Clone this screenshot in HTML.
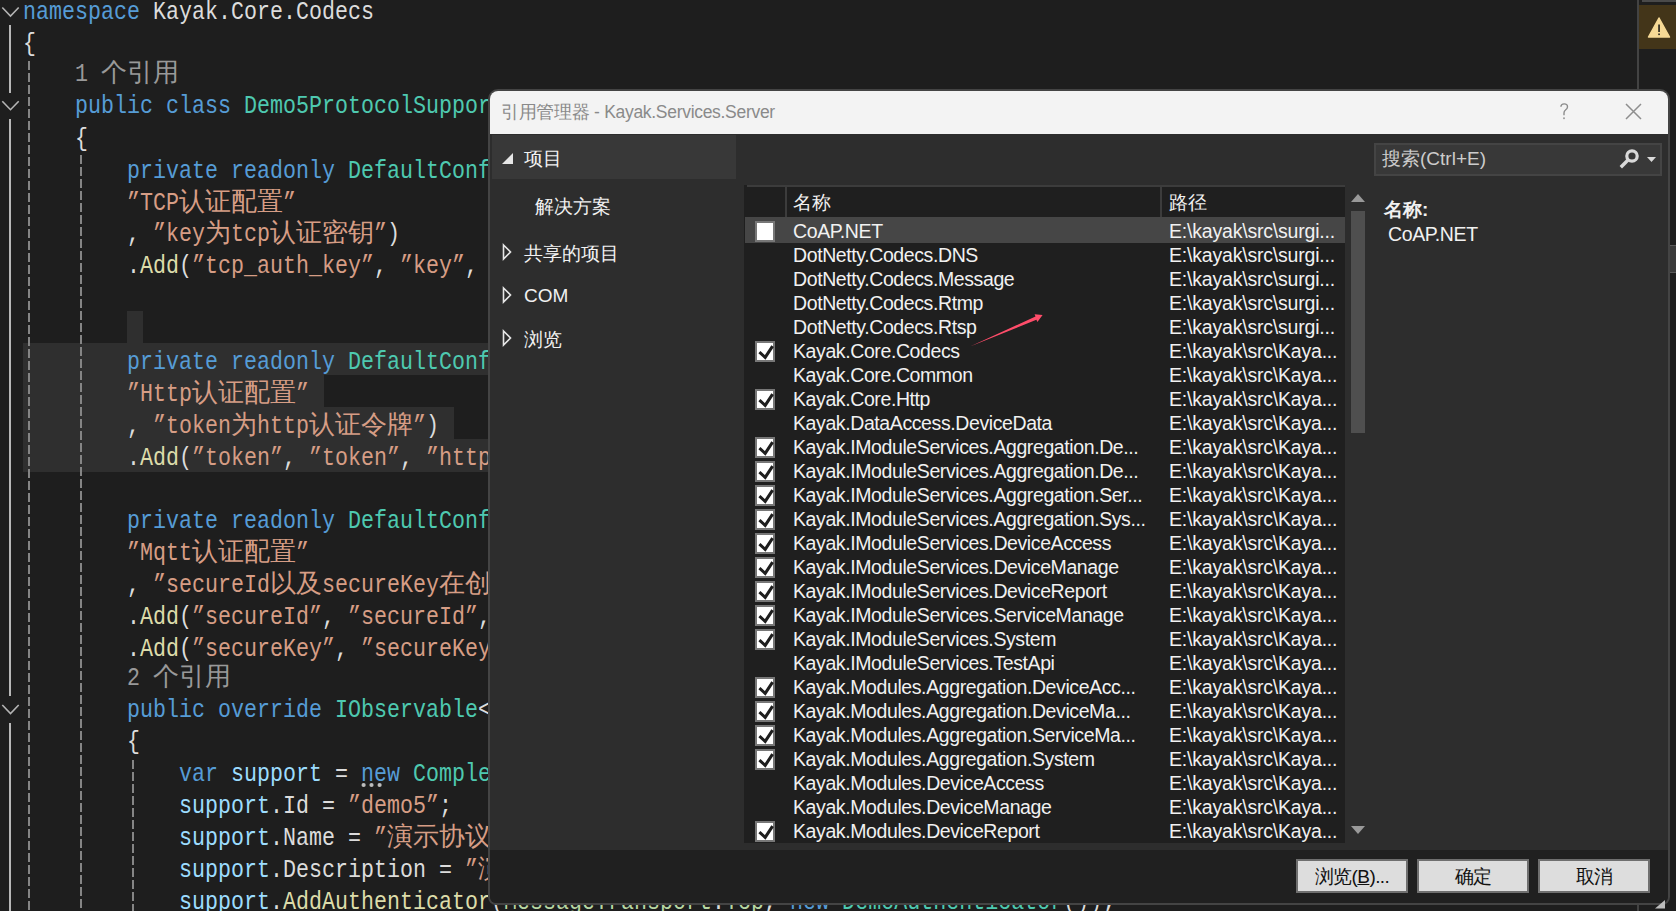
<!DOCTYPE html>
<html><head><meta charset="utf-8"><style>
*{margin:0;padding:0;box-sizing:border-box}
html,body{width:1676px;height:911px;overflow:hidden;background:#1e1e1e;position:relative}
.abs{position:absolute}
.ln{position:absolute;white-space:pre;font-family:"Liberation Mono",monospace;font-size:26px;line-height:32px;height:32px;transform-origin:0 0;transform:scaleX(0.8333)}
.ln .c{display:inline-block;white-space:nowrap;transform:scaleX(1.2);transform-origin:0 0}
.hl{position:absolute;background:#2f2f2f}
.vg{position:absolute;width:2px;background:#bdbdbd}
.dg{position:absolute;width:2px;background:repeating-linear-gradient(to bottom,#858585 0 9px,transparent 9px 12px)}
.chev{position:absolute;width:18px;height:10px}
#dlg{position:absolute;left:488px;top:89px;width:1182px;height:816px;border:2px solid #444;border-radius:10px 10px 8px 8px;background:#2d2d2d;overflow:hidden;font-family:"Liberation Sans",sans-serif}
.ui{font-family:"Liberation Sans",sans-serif;font-size:19px;color:#f1f1f1;white-space:pre;position:absolute;line-height:24px}
.sel{position:absolute;left:745px;width:600px;height:26px;background:#464646}
.cb{position:absolute;left:755px;width:20px;height:21px;background:#fff;border:2px solid #777}
.rt{position:absolute;font-family:"Liberation Sans",sans-serif;font-size:19.5px;letter-spacing:-0.4px;color:#f1f1f1;white-space:pre;line-height:26px;height:26px;margin-top:1.2px}
.btn{position:absolute;top:859px;width:112px;height:34px;background:#dddddd;border:2px solid #6f6f6f;font-family:"Liberation Sans",sans-serif;font-size:19px;letter-spacing:-0.6px;color:#111;text-align:center;line-height:31px}
.tri{position:absolute}
</style></head><body>
<!-- editor -->
<div class="hl" style="left:127px;top:311px;width:16px;height:32px"></div>
<div class="hl" style="left:23px;top:343px;width:470px;height:32px"></div>
<div class="hl" style="left:23px;top:375px;width:301px;height:32px"></div>
<div class="hl" style="left:23px;top:407px;width:431px;height:32px"></div>
<div class="hl" style="left:23px;top:439px;width:470px;height:33px"></div>
<svg class="abs" style="left:0;top:0" width="24" height="911">
<path d="M2.3 7.5 L10.5 16 L18.7 7.5" stroke="#b4b4b4" stroke-width="1.6" fill="none"/>
<path d="M2.3 101.2 L10.5 109.7 L18.7 101.2" stroke="#b4b4b4" stroke-width="1.6" fill="none"/>
<path d="M2.3 705 L10.5 713.5 L18.7 705" stroke="#b4b4b4" stroke-width="1.6" fill="none"/>
<rect x="9" y="25" width="2" height="68" fill="#b8b8b8"/>
<rect x="9" y="119" width="2" height="577" fill="#b8b8b8"/>
<rect x="9" y="723" width="2" height="188" fill="#b8b8b8"/>
</svg>
<div class="dg" style="left:28px;top:61px;height:850px"></div>
<div class="dg" style="left:80px;top:155px;height:756px"></div>
<div class="dg" style="left:132px;top:760px;height:151px"></div>
<div class="ln " style="top:-4.0px;left:23.0px"><span style="color:#569cd6">namespace</span><span style="color:#dcdcdc"> Kayak.Core.Codecs</span></div>
<div class="ln " style="top:27.9px;left:23.0px"><span style="color:#dcdcdc">{</span></div>
<div class="ln lens" style="top:57.6px;left:75.0px"><span style="color:#999999">1 <span class="c" style="width:78px;margin-right:15.6px">个引用</span></span></div>
<div class="ln " style="top:90.4px;left:75.0px"><span style="color:#569cd6">public</span><span style="color:#dcdcdc"> </span><span style="color:#569cd6">class</span><span style="color:#dcdcdc"> </span><span style="color:#4ec9b0">Demo5ProtocolSupportProvider</span><span style="color:#dcdcdc"> : </span><span style="color:#4ec9b0">IProtocolSupportProvider</span></div>
<div class="ln " style="top:122.5px;left:75.0px"><span style="color:#dcdcdc">{</span></div>
<div class="ln " style="top:154.7px;left:127.0px"><span style="color:#569cd6">private</span><span style="color:#dcdcdc"> </span><span style="color:#569cd6">readonly</span><span style="color:#dcdcdc"> </span><span style="color:#4ec9b0">DefaultConfigMetadata</span><span style="color:#dcdcdc"> _tcpConfig = </span><span style="color:#569cd6">new</span><span style="color:#dcdcdc"> </span><span style="color:#4ec9b0">DefaultConfigMetadata</span><span style="color:#dcdcdc">(</span></div>
<div class="ln " style="top:186.6px;left:127.0px"><span style="color:#d69d85">”TCP<span class="c" style="width:104px;margin-right:20.8px">认证配置</span>”</span></div>
<div class="ln " style="top:218.4px;left:127.0px"><span style="color:#dcdcdc">, </span><span style="color:#d69d85">”key<span class="c" style="width:26px;margin-right:5.2px">为</span>tcp<span class="c" style="width:104px;margin-right:20.8px">认证密钥</span>”</span><span style="color:#dcdcdc">)</span></div>
<div class="ln " style="top:250.3px;left:127.0px"><span style="color:#dcdcdc">.</span><span style="color:#dcdcaa">Add</span><span style="color:#dcdcdc">(</span><span style="color:#d69d85">”tcp_auth_key”</span><span style="color:#dcdcdc">, </span><span style="color:#d69d85">”key”</span><span style="color:#dcdcdc">, </span><span style="color:#d69d85">”TCP<span class="c" style="width:52px;margin-right:10.4px">认证</span>KEY”</span><span style="color:#dcdcdc">, </span><span style="color:#4ec9b0">StringType</span><span style="color:#dcdcdc">.Instance);</span></div>
<div class="ln " style="top:345.9px;left:127.0px"><span style="color:#569cd6">private</span><span style="color:#dcdcdc"> </span><span style="color:#569cd6">readonly</span><span style="color:#dcdcdc"> </span><span style="color:#4ec9b0">DefaultConfigMetadata</span><span style="color:#dcdcdc"> _httpConfig = </span><span style="color:#569cd6">new</span><span style="color:#dcdcdc"> </span><span style="color:#4ec9b0">DefaultConfigMetadata</span><span style="color:#dcdcdc">(</span></div>
<div class="ln " style="top:377.8px;left:127.0px"><span style="color:#d69d85">”Http<span class="c" style="width:104px;margin-right:20.8px">认证配置</span>”</span></div>
<div class="ln " style="top:409.7px;left:127.0px"><span style="color:#dcdcdc">, </span><span style="color:#d69d85">”token<span class="c" style="width:26px;margin-right:5.2px">为</span>http<span class="c" style="width:104px;margin-right:20.8px">认证令牌</span>”</span><span style="color:#dcdcdc">)</span></div>
<div class="ln " style="top:441.5px;left:127.0px"><span style="color:#dcdcdc">.</span><span style="color:#dcdcaa">Add</span><span style="color:#dcdcdc">(</span><span style="color:#d69d85">”token”</span><span style="color:#dcdcdc">, </span><span style="color:#d69d85">”token”</span><span style="color:#dcdcdc">, </span><span style="color:#d69d85">”http<span class="c" style="width:52px;margin-right:10.4px">令牌</span>”</span><span style="color:#dcdcdc">, </span><span style="color:#4ec9b0">StringType</span><span style="color:#dcdcdc">.Instance);</span></div>
<div class="ln " style="top:505.3px;left:127.0px"><span style="color:#569cd6">private</span><span style="color:#dcdcdc"> </span><span style="color:#569cd6">readonly</span><span style="color:#dcdcdc"> </span><span style="color:#4ec9b0">DefaultConfigMetadata</span><span style="color:#dcdcdc"> _mqttConfig = </span><span style="color:#569cd6">new</span><span style="color:#dcdcdc"> </span><span style="color:#4ec9b0">DefaultConfigMetadata</span><span style="color:#dcdcdc">(</span></div>
<div class="ln " style="top:537.1px;left:127.0px"><span style="color:#d69d85">”Mqtt<span class="c" style="width:104px;margin-right:20.8px">认证配置</span>”</span></div>
<div class="ln " style="top:569.0px;left:127.0px"><span style="color:#dcdcdc">, </span><span style="color:#d69d85">”secureId<span class="c" style="width:52px;margin-right:10.4px">以及</span>secureKey<span class="c" style="width:442px;margin-right:88.4px">在创建设备产品或设备实例时进行配置</span>.”</span><span style="color:#dcdcdc">)</span></div>
<div class="ln " style="top:600.9px;left:127.0px"><span style="color:#dcdcdc">.</span><span style="color:#dcdcaa">Add</span><span style="color:#dcdcdc">(</span><span style="color:#d69d85">”secureId”</span><span style="color:#dcdcdc">, </span><span style="color:#d69d85">”secureId”</span><span style="color:#dcdcdc">, </span><span style="color:#d69d85">”<span class="c" style="width:52px;margin-right:10.4px">密钥</span>ID”</span><span style="color:#dcdcdc">, </span><span style="color:#4ec9b0">StringType</span><span style="color:#dcdcdc">.Instance)</span></div>
<div class="ln " style="top:632.8px;left:127.0px"><span style="color:#dcdcdc">.</span><span style="color:#dcdcaa">Add</span><span style="color:#dcdcdc">(</span><span style="color:#d69d85">”secureKey”</span><span style="color:#dcdcdc">, </span><span style="color:#d69d85">”secureKey”</span><span style="color:#dcdcdc">, </span><span style="color:#d69d85">”<span class="c" style="width:52px;margin-right:10.4px">密钥</span>”</span><span style="color:#dcdcdc">, </span><span style="color:#4ec9b0">StringType</span><span style="color:#dcdcdc">.Instance);</span></div>
<div class="ln lens" style="top:661.5px;left:127.0px"><span style="color:#999999">2 <span class="c" style="width:78px;margin-right:15.6px">个引用</span></span></div>
<div class="ln " style="top:694.4px;left:127.0px"><span style="color:#569cd6">public</span><span style="color:#dcdcdc"> </span><span style="color:#569cd6">override</span><span style="color:#dcdcdc"> </span><span style="color:#4ec9b0">IObservable</span><span style="color:#dcdcdc">&lt;</span><span style="color:#4ec9b0">ProtocolSupport</span><span style="color:#dcdcdc">&gt; Create(</span></div>
<div class="ln " style="top:726.3px;left:127.0px"><span style="color:#dcdcdc">{</span></div>
<div class="ln " style="top:758.2px;left:179.0px"><span style="color:#569cd6">var</span><span style="color:#dcdcdc"> </span><span style="color:#9cdcfe">support</span><span style="color:#dcdcdc"> = </span><span style="color:#569cd6">new</span><span style="color:#dcdcdc"> </span><span style="color:#4ec9b0">ComplexProtocolSupport</span><span style="color:#dcdcdc">();</span></div>
<div class="ln " style="top:790.0px;left:179.0px"><span style="color:#9cdcfe">support</span><span style="color:#dcdcdc">.Id = </span><span style="color:#d69d85">”demo5”</span><span style="color:#dcdcdc">;</span></div>
<div class="ln " style="top:821.9px;left:179.0px"><span style="color:#9cdcfe">support</span><span style="color:#dcdcdc">.Name = </span><span style="color:#d69d85">”<span class="c" style="width:104px;margin-right:20.8px">演示协议</span>5”</span><span style="color:#dcdcdc">;</span></div>
<div class="ln " style="top:853.8px;left:179.0px"><span style="color:#9cdcfe">support</span><span style="color:#dcdcdc">.Description = </span><span style="color:#d69d85">”<span class="c" style="width:104px;margin-right:20.8px">演示协议</span>5”</span><span style="color:#dcdcdc">;</span></div>
<div class="ln " style="top:885.6px;left:179.0px"><span style="color:#9cdcfe">support</span><span style="color:#dcdcdc">.</span><span style="color:#dcdcaa">AddAuthenticator</span><span style="color:#dcdcdc">(</span><span style="color:#b8d7a3">MessageTransport</span><span style="color:#dcdcdc">.</span><span style="color:#b8d7a3">Tcp</span><span style="color:#dcdcdc">, </span><span style="color:#569cd6">new</span><span style="color:#dcdcdc"> </span><span style="color:#4ec9b0">DemoAuthenticator</span><span style="color:#dcdcdc">());</span></div>

<svg class="abs" style="left:358px;top:780px" width="28" height="10"><circle cx="5.6" cy="5" r="2.1" fill="#bdbdbd"/><circle cx="13.5" cy="5" r="2.1" fill="#bdbdbd"/><circle cx="21.6" cy="5" r="2.1" fill="#bdbdbd"/></svg>
<!-- right strip -->
<div class="abs" style="left:1637px;top:0;width:2px;height:911px;background:#434343"></div>
<div class="abs" style="left:1642px;top:0;width:34px;height:2px;background:#4a4a4a"></div>
<div class="abs" style="left:1639px;top:5px;width:37px;height:44px;background:#433519"></div>
<svg class="abs" style="left:1646px;top:15px" width="26" height="26" viewBox="0 0 26 26"><path d="M13 3 L23.5 22 L2.5 22 Z" fill="#f6d995" stroke="#f6d995" stroke-width="1.5" stroke-linejoin="round"/><rect x="12.3" y="9.5" width="1.5" height="7.5" fill="#111"/><rect x="12.3" y="18.5" width="1.5" height="1.6" fill="#111"/></svg>
<div class="abs" style="left:1668px;top:245px;width:8px;height:28px;background:#3a3a3a;border:1px solid #5a5a5a;border-right:none"></div>

<!-- dialog -->
<div id="dlg">
 <div class="abs" style="left:0;top:0;width:1178px;height:43px;background:#f3f3f3"></div>
 <div class="abs" style="left:0;top:759px;width:1178px;height:60px;background:#202020"></div>
</div>
<div class="ui" style="left:501px;top:100px;font-size:17.5px;letter-spacing:-0.3px;color:#8a8a8a"><span style="display:inline-block;width:88.5px">引用管理器</span> - Kayak.Services.Server</div>
<svg class="abs" style="left:1556px;top:100px" width="16" height="24"><path d="M4.9 6.8 C5 4.7 6.4 3.9 8.2 3.9 C10.2 3.9 11.5 5.1 11.5 6.9 C11.5 8.6 10.3 9.4 9.2 10.3 C8.3 11 8 11.7 8 13 L8 15.3" stroke="#8c8c8c" stroke-width="1.4" fill="none"/><rect x="7.25" y="17.4" width="1.5" height="1.7" fill="#8c8c8c"/></svg>
<svg class="abs" style="left:1624px;top:102px" width="19" height="19"><path d="M2 2 L17 17 M17 2 L2 17" stroke="#8e8e8e" stroke-width="1.5"/></svg>

<div class="abs" style="left:492px;top:135px;width:244px;height:44px;background:#383838"></div>
<svg class="abs" style="left:500px;top:150px" width="16" height="16"><path d="M13 3 L13 14 L2 14 Z" fill="#e6e6e6"/></svg>
<div class="ui" style="left:524px;top:147px">项目</div>
<div class="ui" style="left:535px;top:194.5px">解决方案</div>
<svg class="abs" style="left:500px;top:243px" width="14" height="18"><path d="M3.5 2 L10.5 9 L3.5 16 Z" fill="none" stroke="#e6e6e6" stroke-width="1.6"/></svg>
<div class="ui" style="left:524px;top:241.5px">共享的项目</div>
<svg class="abs" style="left:500px;top:286px" width="14" height="18"><path d="M3.5 2 L10.5 9 L3.5 16 Z" fill="none" stroke="#e6e6e6" stroke-width="1.6"/></svg>
<div class="ui" style="left:524px;top:284px">COM</div>
<svg class="abs" style="left:500px;top:329px" width="14" height="18"><path d="M3.5 2 L10.5 9 L3.5 16 Z" fill="none" stroke="#e6e6e6" stroke-width="1.6"/></svg>
<div class="ui" style="left:524px;top:328px">浏览</div>

<!-- list -->
<div class="abs" style="left:744px;top:185px;width:601px;height:658px;background:#1f1f1f"></div>
<div class="abs" style="left:747px;top:185px;width:598px;height:2px;background:#3c3c3c"></div>
<div class="abs" style="left:785px;top:187px;width:2px;height:30px;background:#3c3c3c"></div>
<div class="abs" style="left:1160px;top:187px;width:2px;height:30px;background:#3c3c3c"></div>
<div class="ui" style="left:793px;top:191px">名称</div>
<div class="ui" style="left:1169px;top:191px">路径</div>
<div class="sel" style="top:217px"></div><div class="cb" style="top:221px"></div><div class="rt" style="top:217px;left:793px">CoAP.NET</div><div class="rt" style="top:217px;left:1169px;letter-spacing:-0.2px">E:\kayak\src\surgi...</div><div class="rt" style="top:241px;left:793px">DotNetty.Codecs.DNS</div><div class="rt" style="top:241px;left:1169px;letter-spacing:-0.2px">E:\kayak\src\surgi...</div><div class="rt" style="top:265px;left:793px">DotNetty.Codecs.Message</div><div class="rt" style="top:265px;left:1169px;letter-spacing:-0.2px">E:\kayak\src\surgi...</div><div class="rt" style="top:289px;left:793px">DotNetty.Codecs.Rtmp</div><div class="rt" style="top:289px;left:1169px;letter-spacing:-0.2px">E:\kayak\src\surgi...</div><div class="rt" style="top:313px;left:793px">DotNetty.Codecs.Rtsp</div><div class="rt" style="top:313px;left:1169px;letter-spacing:-0.2px">E:\kayak\src\surgi...</div><div class="cb" style="top:341px"><svg width="17" height="17" viewBox="0 0 17 17" style="position:absolute;left:0;top:0"><path d="M2.4 9.2 L8.2 14.4 L15.6 3.2" stroke="#1e1e1e" stroke-width="3" fill="none"/></svg></div><div class="rt" style="top:337px;left:793px">Kayak.Core.Codecs</div><div class="rt" style="top:337px;left:1169px;letter-spacing:-0.2px">E:\kayak\src\Kaya...</div><div class="rt" style="top:361px;left:793px">Kayak.Core.Common</div><div class="rt" style="top:361px;left:1169px;letter-spacing:-0.2px">E:\kayak\src\Kaya...</div><div class="cb" style="top:389px"><svg width="17" height="17" viewBox="0 0 17 17" style="position:absolute;left:0;top:0"><path d="M2.4 9.2 L8.2 14.4 L15.6 3.2" stroke="#1e1e1e" stroke-width="3" fill="none"/></svg></div><div class="rt" style="top:385px;left:793px">Kayak.Core.Http</div><div class="rt" style="top:385px;left:1169px;letter-spacing:-0.2px">E:\kayak\src\Kaya...</div><div class="rt" style="top:409px;left:793px">Kayak.DataAccess.DeviceData</div><div class="rt" style="top:409px;left:1169px;letter-spacing:-0.2px">E:\kayak\src\Kaya...</div><div class="cb" style="top:437px"><svg width="17" height="17" viewBox="0 0 17 17" style="position:absolute;left:0;top:0"><path d="M2.4 9.2 L8.2 14.4 L15.6 3.2" stroke="#1e1e1e" stroke-width="3" fill="none"/></svg></div><div class="rt" style="top:433px;left:793px">Kayak.IModuleServices.Aggregation.De...</div><div class="rt" style="top:433px;left:1169px;letter-spacing:-0.2px">E:\kayak\src\Kaya...</div><div class="cb" style="top:461px"><svg width="17" height="17" viewBox="0 0 17 17" style="position:absolute;left:0;top:0"><path d="M2.4 9.2 L8.2 14.4 L15.6 3.2" stroke="#1e1e1e" stroke-width="3" fill="none"/></svg></div><div class="rt" style="top:457px;left:793px">Kayak.IModuleServices.Aggregation.De...</div><div class="rt" style="top:457px;left:1169px;letter-spacing:-0.2px">E:\kayak\src\Kaya...</div><div class="cb" style="top:485px"><svg width="17" height="17" viewBox="0 0 17 17" style="position:absolute;left:0;top:0"><path d="M2.4 9.2 L8.2 14.4 L15.6 3.2" stroke="#1e1e1e" stroke-width="3" fill="none"/></svg></div><div class="rt" style="top:481px;left:793px">Kayak.IModuleServices.Aggregation.Ser...</div><div class="rt" style="top:481px;left:1169px;letter-spacing:-0.2px">E:\kayak\src\Kaya...</div><div class="cb" style="top:509px"><svg width="17" height="17" viewBox="0 0 17 17" style="position:absolute;left:0;top:0"><path d="M2.4 9.2 L8.2 14.4 L15.6 3.2" stroke="#1e1e1e" stroke-width="3" fill="none"/></svg></div><div class="rt" style="top:505px;left:793px">Kayak.IModuleServices.Aggregation.Sys...</div><div class="rt" style="top:505px;left:1169px;letter-spacing:-0.2px">E:\kayak\src\Kaya...</div><div class="cb" style="top:533px"><svg width="17" height="17" viewBox="0 0 17 17" style="position:absolute;left:0;top:0"><path d="M2.4 9.2 L8.2 14.4 L15.6 3.2" stroke="#1e1e1e" stroke-width="3" fill="none"/></svg></div><div class="rt" style="top:529px;left:793px">Kayak.IModuleServices.DeviceAccess</div><div class="rt" style="top:529px;left:1169px;letter-spacing:-0.2px">E:\kayak\src\Kaya...</div><div class="cb" style="top:557px"><svg width="17" height="17" viewBox="0 0 17 17" style="position:absolute;left:0;top:0"><path d="M2.4 9.2 L8.2 14.4 L15.6 3.2" stroke="#1e1e1e" stroke-width="3" fill="none"/></svg></div><div class="rt" style="top:553px;left:793px">Kayak.IModuleServices.DeviceManage</div><div class="rt" style="top:553px;left:1169px;letter-spacing:-0.2px">E:\kayak\src\Kaya...</div><div class="cb" style="top:581px"><svg width="17" height="17" viewBox="0 0 17 17" style="position:absolute;left:0;top:0"><path d="M2.4 9.2 L8.2 14.4 L15.6 3.2" stroke="#1e1e1e" stroke-width="3" fill="none"/></svg></div><div class="rt" style="top:577px;left:793px">Kayak.IModuleServices.DeviceReport</div><div class="rt" style="top:577px;left:1169px;letter-spacing:-0.2px">E:\kayak\src\Kaya...</div><div class="cb" style="top:605px"><svg width="17" height="17" viewBox="0 0 17 17" style="position:absolute;left:0;top:0"><path d="M2.4 9.2 L8.2 14.4 L15.6 3.2" stroke="#1e1e1e" stroke-width="3" fill="none"/></svg></div><div class="rt" style="top:601px;left:793px">Kayak.IModuleServices.ServiceManage</div><div class="rt" style="top:601px;left:1169px;letter-spacing:-0.2px">E:\kayak\src\Kaya...</div><div class="cb" style="top:629px"><svg width="17" height="17" viewBox="0 0 17 17" style="position:absolute;left:0;top:0"><path d="M2.4 9.2 L8.2 14.4 L15.6 3.2" stroke="#1e1e1e" stroke-width="3" fill="none"/></svg></div><div class="rt" style="top:625px;left:793px">Kayak.IModuleServices.System</div><div class="rt" style="top:625px;left:1169px;letter-spacing:-0.2px">E:\kayak\src\Kaya...</div><div class="rt" style="top:649px;left:793px">Kayak.IModuleServices.TestApi</div><div class="rt" style="top:649px;left:1169px;letter-spacing:-0.2px">E:\kayak\src\Kaya...</div><div class="cb" style="top:677px"><svg width="17" height="17" viewBox="0 0 17 17" style="position:absolute;left:0;top:0"><path d="M2.4 9.2 L8.2 14.4 L15.6 3.2" stroke="#1e1e1e" stroke-width="3" fill="none"/></svg></div><div class="rt" style="top:673px;left:793px">Kayak.Modules.Aggregation.DeviceAcc...</div><div class="rt" style="top:673px;left:1169px;letter-spacing:-0.2px">E:\kayak\src\Kaya...</div><div class="cb" style="top:701px"><svg width="17" height="17" viewBox="0 0 17 17" style="position:absolute;left:0;top:0"><path d="M2.4 9.2 L8.2 14.4 L15.6 3.2" stroke="#1e1e1e" stroke-width="3" fill="none"/></svg></div><div class="rt" style="top:697px;left:793px">Kayak.Modules.Aggregation.DeviceMa...</div><div class="rt" style="top:697px;left:1169px;letter-spacing:-0.2px">E:\kayak\src\Kaya...</div><div class="cb" style="top:725px"><svg width="17" height="17" viewBox="0 0 17 17" style="position:absolute;left:0;top:0"><path d="M2.4 9.2 L8.2 14.4 L15.6 3.2" stroke="#1e1e1e" stroke-width="3" fill="none"/></svg></div><div class="rt" style="top:721px;left:793px">Kayak.Modules.Aggregation.ServiceMa...</div><div class="rt" style="top:721px;left:1169px;letter-spacing:-0.2px">E:\kayak\src\Kaya...</div><div class="cb" style="top:749px"><svg width="17" height="17" viewBox="0 0 17 17" style="position:absolute;left:0;top:0"><path d="M2.4 9.2 L8.2 14.4 L15.6 3.2" stroke="#1e1e1e" stroke-width="3" fill="none"/></svg></div><div class="rt" style="top:745px;left:793px">Kayak.Modules.Aggregation.System</div><div class="rt" style="top:745px;left:1169px;letter-spacing:-0.2px">E:\kayak\src\Kaya...</div><div class="rt" style="top:769px;left:793px">Kayak.Modules.DeviceAccess</div><div class="rt" style="top:769px;left:1169px;letter-spacing:-0.2px">E:\kayak\src\Kaya...</div><div class="rt" style="top:793px;left:793px">Kayak.Modules.DeviceManage</div><div class="rt" style="top:793px;left:1169px;letter-spacing:-0.2px">E:\kayak\src\Kaya...</div><div class="cb" style="top:821px"><svg width="17" height="17" viewBox="0 0 17 17" style="position:absolute;left:0;top:0"><path d="M2.4 9.2 L8.2 14.4 L15.6 3.2" stroke="#1e1e1e" stroke-width="3" fill="none"/></svg></div><div class="rt" style="top:817px;left:793px">Kayak.Modules.DeviceReport</div><div class="rt" style="top:817px;left:1169px;letter-spacing:-0.2px">E:\kayak\src\Kaya...</div>
<!-- arrow -->
<svg class="abs" style="left:960px;top:305px" width="90" height="50"><path d="M10 41.5 L75.5 11.6 L74.6 9.2 L82.6 10 L77.4 17 L76.4 14.8 Z" fill="#ff4d6a"/></svg>
<!-- scrollbar -->
<svg class="abs" style="left:1350px;top:192px" width="16" height="12"><path d="M1 10 L8 2 L15 10 Z" fill="#999"/></svg>
<div class="abs" style="left:1351px;top:211px;width:14px;height:222px;background:#4f4f4f"></div>
<svg class="abs" style="left:1350px;top:824px" width="16" height="12"><path d="M1 2 L8 10 L15 2 Z" fill="#999"/></svg>

<!-- search -->
<div class="abs" style="left:1374px;top:143px;width:288px;height:33px;background:#383838;border:2px solid #444"></div>
<div class="ui" style="left:1382px;top:147px;color:#cccccc"><span style="display:inline-block;width:38px">搜索</span>(Ctrl+E)</div>
<svg class="abs" style="left:1616px;top:145px" width="24" height="26"><circle cx="16" cy="11" r="5.2" stroke="#d9d9d9" stroke-width="3.2" fill="none"/><path d="M12.5 14.5 L4.8 22.2" stroke="#d9d9d9" stroke-width="3.4"/></svg>
<svg class="abs" style="left:1646px;top:156px" width="12" height="8"><path d="M1 1 L10 1 L5.5 6 Z" fill="#d9d9d9"/></svg>
<div class="ui" style="left:1384px;top:198px;font-weight:bold">名称:</div>
<div class="ui" style="left:1388px;top:222px;font-size:19.5px;letter-spacing:-0.4px">CoAP.NET</div>

<!-- footer -->

<svg class="abs" style="left:1650px;top:895px" width="20" height="16"><path d="M5 13.5 L15 13.5 L15 5 Z" fill="#bdbdbd"/></svg>
<div class="btn" style="left:1296px"><span style="display:inline-block;width:36.8px">浏览</span>(<u>B</u>)...</div>
<div class="btn" style="left:1417px">确定</div>
<div class="btn" style="left:1538px">取消</div>
</body></html>
